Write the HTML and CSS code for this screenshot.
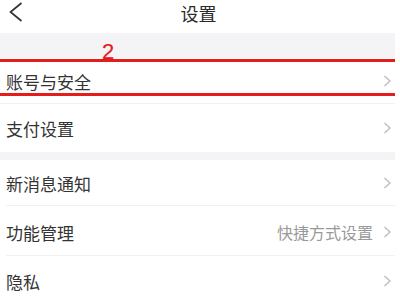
FILE: index.html
```html
<!DOCTYPE html>
<html lang="zh">
<head>
<meta charset="utf-8">
<title>设置</title>
<link rel="stylesheet" href="styles.css">
</head>
<body>
<div class="page">
  <header class="topbar">
    <svg class="back" width="14" height="20" viewBox="0 0 14 20"><polyline points="12.5,1 1.5,10 12.5,19" fill="none" stroke="#333" stroke-width="1.7"/></svg>
    <h1 class="title">设置</h1>
  </header>
  <div class="gap gap-top"><span class="mark">2</span></div>
  <div class="row row-1 highlighted">
    <span class="label">账号与安全</span>
    <span class="right"><svg class="chev" width="9" height="12" viewBox="0 0 9 12"><polyline points="1.5,1 7,6 1.5,11" fill="none" stroke="#bdbdbd" stroke-width="1.4"/></svg></span>
  </div>
  <div class="row row-2">
    <span class="label">支付设置</span>
    <span class="right"><svg class="chev" width="9" height="12" viewBox="0 0 9 12"><polyline points="1.5,1 7,6 1.5,11" fill="none" stroke="#bdbdbd" stroke-width="1.4"/></svg></span>
  </div>
  <div class="gap gap-mid"></div>
  <div class="row row-3 lined">
    <span class="label">新消息通知</span>
    <span class="right"><svg class="chev" width="9" height="12" viewBox="0 0 9 12"><polyline points="1.5,1 7,6 1.5,11" fill="none" stroke="#bdbdbd" stroke-width="1.4"/></svg></span>
  </div>
  <div class="row row-4 lined">
    <span class="label">功能管理</span>
    <span class="right"><span class="hint">快捷方式设置</span><svg class="chev" width="9" height="12" viewBox="0 0 9 12"><polyline points="1.5,1 7,6 1.5,11" fill="none" stroke="#bdbdbd" stroke-width="1.4"/></svg></span>
  </div>
  <div class="row row-5">
    <span class="label">隐私</span>
    <span class="right"><svg class="chev" width="9" height="12" viewBox="0 0 9 12"><polyline points="1.5,1 7,6 1.5,11" fill="none" stroke="#bdbdbd" stroke-width="1.4"/></svg></span>
  </div>
</div>
</body>
</html>
```
FILE: styles.css
```css
html, body {
  margin: 0;
  padding: 0;
  background: #fff;
  overflow: hidden;
}
body {
  font-family: "Noto Sans CJK SC", "Noto Sans", sans-serif;
  color: #333;
}
.page {
  width: 395px;
}
.topbar {
  position: relative;
  height: 33px;
  display: flex;
  align-items: center;
  justify-content: center;
}
.back {
  position: absolute;
  left: 9px;
  top: 2px;
}
.title {
  margin: 0;
  font-size: 18px;
  font-weight: 400;
  line-height: 1;
  color: #2a2a2a;
  margin-top: -7px;
  margin-left: 2px;
}
.gap {
  background: #f4f4f6;
}
.gap-top {
  position: relative;
  height: 25px;
}
.gap-mid {
  height: 8px;
}
.mark {
  position: absolute;
  left: 102px;
  top: 8px;
  font-family: "Liberation Sans", sans-serif;
  font-size: 22px;
  line-height: 1;
  color: #e51c1c;
  -webkit-text-stroke: 0.2px #e51c1c;
}
.row {
  position: relative;
  display: flex;
  align-items: center;
  justify-content: space-between;
  padding-left: 6px;
  padding-right: 3px;
  box-sizing: border-box;
}
.row-1 { height: 45px; padding-top: 1px; }
.row-2 { height: 49px; padding-top: 0; border-top: 1px solid #f1f1f1; }
.row-3 { height: 46px; padding-top: 0; }
.row-4 { height: 50px; padding-top: 2px; }
.row-5 { height: 50px; padding-top: 0; }
.lined::after {
  content: "";
  position: absolute;
  left: 6px;
  right: 0;
  bottom: 0;
  height: 1px;
  background: #f0f0f0;
}
.highlighted::before,
.highlighted::after {
  content: "";
  position: absolute;
  left: 0;
  right: 0;
  height: 3px;
  background: #e51c1c;
}
.highlighted::before { top: 1px; }
.highlighted::after { bottom: 7px; }
.label {
  font-size: 17px;
  line-height: 1;
}
.right {
  display: flex;
  align-items: center;
  gap: 10px;
}
.hint {
  font-size: 16px;
  line-height: 1;
  color: #999;
}
.chev {
  display: block;
}
```
